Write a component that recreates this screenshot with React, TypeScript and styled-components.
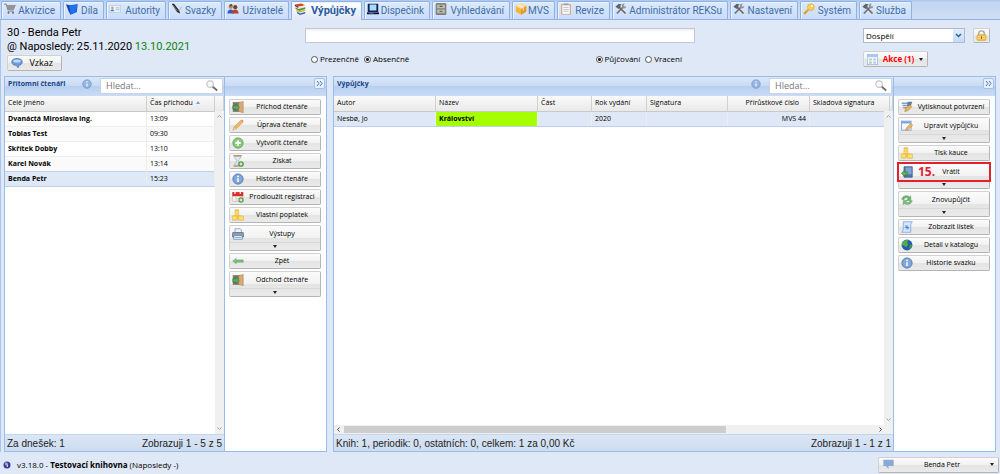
import React from "react";
import styled, { createGlobalStyle, css } from "styled-components";

const GlobalStyle = createGlobalStyle`
  *, *::before, *::after { box-sizing: border-box; }
  body {
    margin: 0;
    background: #dfe8f6;
    font-family: "Open Sans", "Noto Sans", sans-serif;
    font-size: 7px;
    line-height: 10px;
    color: #000;
  }
  button, input, select { font: inherit; color: inherit; margin: 0; }
  svg { display: block; flex: none; }
`;

/* ---------- icons ---------- */

type IconName =
  | "cart" | "book" | "card" | "pen" | "users" | "books" | "monitor" | "cabinet"
  | "box" | "clipboard" | "tools" | "key" | "bubble" | "lock" | "calendar"
  | "door" | "pencil" | "add" | "hourglass" | "info" | "calAdd" | "coins"
  | "printer" | "arrowLeft" | "print" | "edit" | "returnBook" | "recycle"
  | "script" | "globe" | "flag" | "search" | "orb";

const shapes: Record<IconName, React.ReactNode> = {
  cart: (
    <>
      <path d="M0 1.500h3l2 7.500h7.500L15 2.500" fill="none" stroke="#7d7d7d" strokeWidth="1.300" />
      <path d="M3.500 2.500h11.500l-2.500 6H5z" fill="#949494" />
      <path d="M5 11h8" stroke="#777" />
      <circle cx="6" cy="13" r="1.300" fill="#666" />
      <circle cx="12" cy="13" r="1.300" fill="#666" />
    </>
  ),
  book: (
    <>
      <path d="M0 1.500l5 1.500L15.500 1.500 14.500 12 6 15.500 3.500 11z" fill="#0f48b8" />
      <path d="M4 3.500L15 2l-1 9.500-7.500 3z" fill="#2172ee" />
    </>
  ),
  card: (
    <>
      <rect x="0.500" y="3.500" width="15" height="9" fill="#eaf2fc" stroke="#b7cdea" />
      <circle cx="4.500" cy="6.500" r="1.700" fill="#c9a26b" />
      <path d="M2 11c0-3 5-3 5 0z" fill="#4d7fc4" />
      <path d="M9 6.500h5M9 9h5" stroke="#8eb0dc" />
    </>
  ),
  pen: (
    <>
      <path d="M1 1l3 0 7 9 1 4-4-2z" fill="#222" />
      <path d="M3 3l6 8" stroke="#999" />
      <path d="M10 10c2-1 3-2 4-5" stroke="#9aa8bb" fill="none" />
    </>
  ),
  users: (
    <>
      <circle cx="5" cy="5" r="2.800" fill="#b5824f" />
      <path d="M0.500 14c0-7 9-7 9 0z" fill="#2f5fb3" />
      <circle cx="11" cy="5.500" r="2.800" fill="#7a4222" />
      <path d="M6.500 14c0-7 9-7 9 0z" fill="#b8442c" />
      <path d="M3 3.500c1-2.500 4-2 4.500 0z" fill="#4d3116" />
    </>
  ),
  books: (
    <>
      <path d="M1 2l9-1.500 5 2.500-9 2z" fill="#d4432c" />
      <path d="M1 2l5 3v2L1 4z" fill="#8f2413" />
      <path d="M6 5l9-2v2L6 7z" fill="#f6e7c6" />
      <path d="M2 5.500l4 2.500 9-2.500v2.500L7 10.500 2 7.500z" fill="#4a9b3e" />
      <path d="M3 8.500l4 2.500 8-2.500v2l-8 2.500-4-2.500z" fill="#e9ae2e" />
      <path d="M4 11.500L8 14l7-2v2l-7 2-4-2.500z" fill="#2d67b8" />
    </>
  ),
  monitor: (
    <>
      <rect x="1" y="1" width="14" height="11" fill="#12225c" />
      <rect x="3.500" y="2" width="9" height="8" fill="#a8dcf8" />
      <path d="M0 12.500h16v2.500H0z" fill="#0b1030" />
      <path d="M3 13.500h6" stroke="#7f8fc4" />
    </>
  ),
  cabinet: (
    <>
      <rect x="1.500" y="0.500" width="13" height="15" rx="1" fill="#8f9187" stroke="#6a6c64" />
      <path d="M3 2.500h10v4H3zM3 9h10v4H3z" fill="#bfc1b6" />
      <path d="M6 4.500h4M6 11h4" stroke="#55574f" strokeWidth="1.500" />
    </>
  ),
  box: (
    <>
      <path d="M8 0.500l7 3.500v7.500L8 15.500 1 11.500V4z" fill="#f4b53f" />
      <path d="M8 0.500L15 4 8 8 1 4z" fill="#ffe09a" />
      <path d="M8 8l7-4v7.500l-7 4z" fill="#e39a2c" />
      <path d="M4 2.500l7 4v3" stroke="#fff3cf" strokeWidth="1.500" fill="none" />
    </>
  ),
  clipboard: (
    <>
      <rect x="1.500" y="1.500" width="13" height="14" fill="#d3a47c" />
      <rect x="3" y="3" width="10" height="11.500" fill="#fbfbfb" />
      <rect x="5" y="0.500" width="6" height="2.500" fill="#a5a5a5" />
      <path d="M4.500 6h7M4.500 8.500h7M4.500 11h7" stroke="#a9b6c6" />
    </>
  ),
  tools: (
    <>
      <path d="M2.500 14L11 5" stroke="#6b747e" strokeWidth="2.200" />
      <path d="M9 4c0-3 3-4 4-3l-1.500 2 1.500 2 2-1c0 3-3 4-5 3z" fill="#8b949e" />
      <path d="M5 5l9 9" stroke="#7b624a" strokeWidth="2.200" />
      <path d="M0.500 5L5 1l4 1-2 1.500.5 2L5 8z" fill="#5b636d" />
    </>
  ),
  key: (
    <>
      <path d="M8 8L2 14" stroke="#e0a934" strokeWidth="3" />
      <path d="M3 11l2 2M1 13l2 2" stroke="#d99d1c" strokeWidth="1.500" />
      <circle cx="10.500" cy="5.500" r="4.500" fill="#f8cf5e" stroke="#e0a934" />
      <circle cx="12" cy="4" r="1.300" fill="#fff" />
    </>
  ),
  bubble: (
    <>
      <path d="M8 2c4 0 7 1.500 7 4.500S12.500 11 10.500 11l-1 3.500L7 11c-3.500 0-6-1.500-6-4.500S4 2 8 2z" fill="#6f9bdc" stroke="#4a74b8" />
      <ellipse cx="8" cy="5.300" rx="5" ry="2" fill="#c2d8f7" />
    </>
  ),
  lock: (
    <>
      <path d="M4 8V5c0-5 8-5 8 0v3" fill="none" stroke="#a8a8a8" strokeWidth="2" />
      <rect x="1.500" y="7" width="13" height="8" rx="1" fill="#f3c34e" stroke="#d09a2c" />
      <path d="M2 9.500h12M2 12.500h12" stroke="#fbe2a0" />
      <path d="M8 9v4" stroke="#9d6c12" strokeWidth="1.500" />
    </>
  ),
  calendar: (
    <>
      <rect x="0.500" y="0.500" width="15" height="15" fill="#f4f9ff" stroke="#8fb2de" />
      <path d="M1 1h14v3.500H1z" fill="#a9c8ef" />
      <path d="M3 6.500h4v3H3zM3 11h4v3H3z" fill="#b6d0b9" />
      <path d="M9 6.500h4v3H9zM9 11h4v3H9z" fill="#b7cdea" />
    </>
  ),
  door: (
    <>
      <path d="M1 1.500h10v13H1z" fill="#7b786d" />
      <path d="M9 2l6-1.500V15.500L9 14z" fill="#d5aa76" stroke="#a57a46" strokeWidth="0.600" />
      <path d="M1 6.500h4V4l4.500 4.500L5 13v-2.500H1z" fill="#5aae5f" stroke="#2c6e34" strokeWidth="0.700" />
    </>
  ),
  pencil: (
    <>
      <path d="M3 10.500L12 1.500l2.500 2.500-9 9z" fill="#f3b95c" stroke="#c98a30" strokeWidth="0.800" />
      <path d="M12 1.500l2.500 2.500 1-1.500-2-2z" fill="#e5886e" />
      <path d="M3 10.500l2.500 2.500L1 15z" fill="#f2ddb5" stroke="#b98b4e" strokeWidth="0.600" />
    </>
  ),
  add: (
    <>
      <circle cx="8" cy="8" r="7" fill="#7dbf6f" stroke="#6bab62" />
      <circle cx="8" cy="8" r="5.200" fill="#8fcb80" />
      <path d="M8 4.500v7M4.500 8h7" stroke="#fff" strokeWidth="2.400" />
    </>
  ),
  hourglass: (
    <>
      <path d="M2 1h11M2 14.500h7" stroke="#b98e62" strokeWidth="2" />
      <path d="M3.500 2h8c0 4-3 4-3 6s1 2 2 5.500h-7C3.500 11 6.500 10 6.500 8s-3-2-3-6z" fill="#dfe8ee" stroke="#9aa5b0" strokeWidth="0.800" />
      <circle cx="12" cy="12" r="3.800" fill="#4f9d45" />
      <path d="M12 10v4M10 12h4" stroke="#fff" strokeWidth="1.400" />
    </>
  ),
  info: (
    <>
      <circle cx="8" cy="8" r="7" fill="#6d96cf" stroke="#6489bd" />
      <circle cx="8" cy="8" r="5.300" fill="#85a9da" />
      <path d="M8 7v5" stroke="#fff" strokeWidth="2" />
      <circle cx="8" cy="4.500" r="1.200" fill="#fff" />
    </>
  ),
  calAdd: (
    <>
      <rect x="1" y="2" width="13.500" height="12" fill="#f7f7f7" stroke="#c0c0c0" />
      <path d="M0.500 1.500h14.500V7H0.500z" fill="#dd2a2a" />
      <path d="M4 0v4M11 0v4" stroke="#fff" strokeWidth="1.500" />
      <path d="M4 9.500h4M4 12h3" stroke="#b5b5b5" />
      <circle cx="12" cy="12" r="3.600" fill="#4f9d45" />
      <path d="M12 10v4M10 12h4" stroke="#fff" strokeWidth="1.400" />
    </>
  ),
  coins: (
    <>
      <path d="M4 1h5v12H4z" fill="#f3c944" stroke="#e0ae38" strokeWidth="0.700" />
      <path d="M0.500 9h6v6h-6zM8.500 8.500l7 1V15h-7z" fill="#f8d65c" stroke="#e0ae38" strokeWidth="0.700" />
      <path d="M4 4h5M4 7h5M1 12h5M9 12.300h6" stroke="#fff0ae" />
    </>
  ),
  printer: (
    <>
      <path d="M4 6V1h7l1.500 1.500V6z" fill="#eef4fc" stroke="#7b95b8" />
      <path d="M1 6h14l.5 6H.5z" fill="#8f9cae" stroke="#5f6f86" />
      <path d="M3 10h10l1 5H2z" fill="#e9f0fb" stroke="#6d86ad" />
      <path d="M4 12.500h8" stroke="#7fa7e0" strokeWidth="1.300" />
    </>
  ),
  arrowLeft: (
    <path d="M1 8l4.500-3.500v2H15v3H5.500v2z" fill="#7dc07f" stroke="#5ea263" strokeWidth="0.700" />
  ),
  print: (
    <>
      <path d="M1 3h9M2 6h7M3 9h5" stroke="#8ba0bb" strokeWidth="1.800" />
      <path d="M9 1h6l-2 6H8z" fill="#617b9f" />
      <path d="M5 14l1-4 6-5 2.500 2.500L9 13z" fill="#e9b35b" stroke="#a8793a" strokeWidth="0.700" />
    </>
  ),
  edit: (
    <>
      <rect x="0.500" y="1.500" width="13" height="12" fill="#f4f8fe" stroke="#6b95d2" />
      <path d="M1 2h12v2.500H1z" fill="#6f9ee2" />
      <path d="M7 10.500l6-6 2.500 2.500-6 6-3.500 1z" fill="#f0b55a" stroke="#bf8330" strokeWidth="0.700" />
    </>
  ),
  returnBook: (
    <>
      <path d="M4 1h11v14H4z" fill="#4d77b0" stroke="#3d5c8d" />
      <path d="M6 2h8v9H6z" fill="#7fa3cf" />
      <path d="M0.500 9.500L5 5.500v2.500h4v4H5v2.500z" fill="#62ad59" stroke="#2f7434" strokeWidth="0.700" />
    </>
  ),
  recycle: (
    <>
      <path d="M1 7c1-5 8-6 10-3l2-1.500V8.500H7.500L9.500 6C8 4 4.500 4.500 4 7.500z" fill="#6fb36f" stroke="#5a9a61" strokeWidth="0.700" />
      <path d="M15 9c-1 5-8 6-10 3.500L3 14V8.500h5.500l-2 2C8 12.500 11.500 11.500 12 9z" fill="#7fbd7a" stroke="#5a9a61" strokeWidth="0.700" />
    </>
  ),
  script: (
    <>
      <path d="M3 1h12l-2 3v11H1l2-3z" fill="#d7e7fb" stroke="#6f9fdc" />
      <path d="M5 8.500h6M8 5.500v6M5.500 6l5 5" stroke="#4b86d3" strokeWidth="1.300" />
    </>
  ),
  globe: (
    <>
      <circle cx="8" cy="8" r="7.200" fill="#2459b5" />
      <path d="M3 3c3-2 6-2 7-1.500L8 5l2 2-3 4-3-2-3-1c0-2 1-4 2-5z" fill="#4fae4a" />
      <path d="M11 8l4-1c0 4-2 6-4 7z" fill="#3f9a42" />
    </>
  ),
  flag: <path d="M0.500 1h15v9H8v4.500L4 10H0.500z" fill="#8aa8d8" />,
  search: (
    <>
      <circle cx="5.500" cy="5.500" r="4.300" fill="#f9f9f9" stroke="#c6c6c6" strokeWidth="1.500" />
      <path d="M9 9l6 5" stroke="#6a6a6a" strokeWidth="2.200" />
    </>
  ),
  orb: (
    <>
      <circle cx="8" cy="8" r="7" fill="#3f3a8f" />
      <circle cx="6.500" cy="5.500" r="3.200" fill="#9a9ae0" />
      <path d="M8.500 7v5" stroke="#fff" strokeWidth="2" />
    </>
  ),
};

const Icon = ({ name, size = 12 }: { name: IconName; size?: number }) => (
  <svg width={size} height={size} viewBox="0 0 16 16" aria-hidden="true">
    {shapes[name]}
  </svg>
);

/* ---------- page ---------- */

const Page = styled.div`
  display: flex;
  flex-direction: column;
  min-height: 100vh;
`;

const TabBar = styled.nav`
  display: flex;
  align-items: flex-end;
  gap: 2px;
  height: 20px;
  padding: 0 1px;
  border-bottom: 1px solid #8db2e3;
  background: linear-gradient(#a9c5ee 0, #c0d5f3 2px, #d0dff3 100%);
`;

const Tab = styled.button<{ $width: number; $active?: boolean }>`
  display: flex;
  align-items: flex-start;
  justify-content: space-between;
  flex: 0 1 ${(p) => p.$width}px;
  min-width: 0;
  height: 18px;
  padding: 0 5px 0 2px;
  border: 1px solid #8db2e3;
  border-bottom: 0;
  border-radius: 2px 2px 0 0;
  background: linear-gradient(#dce9fc, #c9dcfb);
  box-shadow: inset 1px 1px 0 #eaf2fd;
  font-family: Roboto, "Open Sans", sans-serif;
  font-size: 10px;
  line-height: 18px;
  white-space: nowrap;
  color: #416da3;
  ${(p) =>
    p.$active &&
    css`
      height: 19px;
      margin-bottom: -1px;
      background: linear-gradient(#ffffff, #dfe8f6);
      font-size: 11px;
      font-weight: 700;
      color: #2d5c9e;
    `}
  svg { margin-top: 1px; }
`;

const Top = styled.header`
  display: grid;
  grid-template-columns: 304px minmax(0, 390px) 1fr;
  height: 56px;
  padding-top: 6px;
  border-left: 1px solid #a9c5ee;
`;

const Reader = styled.div`
  display: flex;
  flex-direction: column;
  align-items: flex-start;
  padding-left: 6px;
  font-family: Roboto, "Open Sans", sans-serif;
  font-size: 11px;
  line-height: 14px;
`;

const Fresh = styled.span`
  color: #0a870a;
`;

const buttonFace = css`
  border: 1px solid #d1d1d1;
  border-right-color: #b4b4b4;
  border-bottom-color: #b4b4b4;
  border-radius: 2px;
  background: linear-gradient(#fbfbfb, #f2f2f2 48%, #e4e4e4 52%, #eaeaea);
`;

const MessageButton = styled.button`
  ${buttonFace}
  display: flex;
  align-items: center;
  justify-content: space-between;
  width: 55px;
  height: 16px;
  margin-top: 1px;
  padding: 0 8px 0 3px;
  font-family: "Open Sans", sans-serif;
  font-size: 9px;
  line-height: 12px;
`;

const Entry = styled.div`
  display: flex;
  flex-direction: column;
  gap: 10px;
  padding-top: 2px;
`;

const CodeInput = styled.input`
  width: 100%;
  height: 15px;
  padding: 0 4px;
  border: 1px solid #c3c8d6;
  background: linear-gradient(#eeeeee, #ffffff 3px);
  font-size: 9px;
`;

const Modes = styled.div`
  display: flex;
  justify-content: space-between;
  padding: 0 13px 0 6px;
`;

const RadioGroup = styled.div`
  display: flex;
  gap: 5px;
`;

const RadioLabel = styled.label`
  display: flex;
  align-items: center;
  gap: 2px;
  font-size: 8px;
  line-height: 12px;
`;

const Radio = styled.input`
  appearance: none;
  width: 7px;
  height: 7px;
  border: 1px solid #555;
  border-radius: 50%;
  background: #fff;
  &:checked {
    background: radial-gradient(circle, #222 0 1px, #fff 2px);
  }
`;

const Options = styled.div`
  display: flex;
  flex-direction: column;
  gap: 8px;
  justify-self: end;
  width: 137px;
  padding-top: 2px;
`;

const OptionRow = styled.div`
  display: flex;
  align-items: center;
  gap: 8px;
`;

const SelectWrap = styled.div`
  display: flex;
  width: 102px;
  height: 15px;
  border: 1px solid #b5b8c8;
  background: #fff;
`;

const Select = styled.select`
  appearance: none;
  width: 100%;
  padding: 0 2px;
  border: 0;
  background:
    no-repeat right / 11px 100% linear-gradient(#e3eefc, #c3daf8);
  font-size: 8px;
  line-height: 12px;
`;

const SelectMark = styled.span`
  display: flex;
  align-items: center;
  width: 0;
  direction: rtl;
  pointer-events: none;
  svg { margin-right: 2px; }
`;

const LockButton = styled.button`
  ${buttonFace}
  display: grid;
  place-items: center;
  width: 17px;
  height: 15px;
  padding: 0;
`;

const ActionsButton = styled.button`
  ${buttonFace}
  display: flex;
  align-items: center;
  justify-content: space-between;
  width: 65px;
  height: 16px;
  padding: 0 4px 0 3px;
  font-size: 8px;
  font-weight: 700;
  color: #f00;
`;

const Caret = styled.span`
  width: 0;
  height: 0;
  border: 2px solid transparent;
  border-top: 3px solid #222;
  border-bottom: 0;
`;

/* ---------- panels ---------- */

const Work = styled.main`
  display: flex;
  flex: 1;
  gap: 6px;
  padding: 0 4px 0 3px;
  border-left: 1px solid #a9c5ee;
`;

const Panel = styled.section<{ $width?: number }>`
  display: flex;
  flex: ${(p) => (p.$width ? `0 0 ${p.$width}px` : "1 1 0")};
  min-width: 0;
  border: 1px solid #99bce8;
  background: #fff;
`;

const GridArea = styled.div`
  display: flex;
  flex: 1;
  flex-direction: column;
  min-width: 0;
  border-right: 1px solid #99bce8;
`;

const SideArea = styled.aside`
  flex: 0 0 101px;
`;

const PanelHead = styled.div`
  display: flex;
  align-items: flex-start;
  height: 19px;
  padding: 1px 1px 0 3px;
  background: linear-gradient(#dbe7f7, #c9dbf3 45%, #b7cff0 50%, #cadcf5);
`;

const PanelTitle = styled.h2`
  flex: 1;
  margin: 0;
  font-size: 7px;
  line-height: 12px;
  font-weight: 700;
  color: #15428b;
`;

const HeadInfo = styled.span`
  margin: 1px 8px 0 0;
  opacity: 0.7;
`;

const SearchBox = styled.label`
  display: flex;
  align-items: center;
  width: 123px;
  height: 16px;
  padding: 0 4px 0 5px;
  border: 1px solid #c9d3e3;
  background: #fff;
`;

const SearchInput = styled.input`
  flex: 1;
  min-width: 0;
  padding: 0;
  border: 0;
  background: none;
  font-size: 9px;
  line-height: 12px;
  &::placeholder { color: #777; opacity: 1; }
`;

const CollapseButton = styled.button`
  display: grid;
  place-items: center;
  width: 11px;
  height: 11px;
  margin: 0 0 0 auto;
  padding: 0;
  border: 1px solid #a4c0e8;
  border-radius: 2px;
  background: #e6effc;
`;

const Viewport = styled.div`
  display: flex;
  flex: 1;
  flex-direction: column;
  position: relative;
`;

const Table = styled.table`
  width: 100%;
  border-collapse: collapse;
  table-layout: fixed;
`;

const HeadCell = styled.th<{ $end?: boolean }>`
  height: 15px;
  padding: 0 10px 0 3px;
  border-right: 1px solid #d0d0d0;
  border-bottom: 1px solid #c9c9c9;
  background: linear-gradient(#fafafa, #e9e9ea);
  font-weight: 400;
  text-align: ${(p) => (p.$end ? "right" : "left")};
  white-space: nowrap;
`;

const Sort = styled.span`
  display: inline-block;
  margin-left: 3px;
  border: 2px solid transparent;
  border-top: 0;
  border-bottom: 3px solid #6f9fdc;
  vertical-align: 1px;
`;

const Cell = styled.td<{ $bold?: boolean; $end?: boolean; $mark?: boolean }>`
  height: 15px;
  padding: 0 3px;
  border-top: 1px solid #ededed;
  border-right: 1px solid #ededed;
  background: ${(p) => (p.$mark ? "#a6ff00" : "transparent")};
  font-weight: ${(p) => (p.$bold ? 700 : 400)};
  text-align: ${(p) => (p.$end ? "right" : "left")};
  white-space: nowrap;
`;

const Row = styled.tr<{ $selected?: boolean }>`
  background: #fff;
  &:nth-child(even) { background: #fafafa; }
  ${(p) =>
    p.$selected &&
    css`
      &, &:nth-child(odd) { background: #dfe8f6; }
      ${Cell} {
        border-top: 1px solid #bdd0ef;
        border-bottom: 1px solid #bdd0ef;
      }
    `}
`;

const VScroll = styled.div<{ $short?: boolean }>`
  position: absolute;
  top: 15px;
  right: 0;
  bottom: ${(p) => (p.$short ? 9 : 0)}px;
  display: flex;
  flex-direction: column;
  align-items: center;
  justify-content: space-between;
  width: 9px;
  padding: 3px 0;
  background: #f0f0f0;
`;

const HScroll = styled.div`
  display: flex;
  align-items: center;
  gap: 3px;
  height: 9px;
  margin-top: auto;
  padding: 0 10px 0 2px;
  background: #f0f0f0;
`;

const HTrack = styled.div`
  flex: 1;
  height: 9px;
`;

const HThumb = styled.div`
  width: 72%;
  height: 7px;
  margin-top: 1px;
  background: #cdcdcd;
`;

const Summary = styled.div`
  display: flex;
  align-items: center;
  justify-content: space-between;
  height: 17px;
  padding: 1px 2px 0;
  border-top: 1px solid #c2d4ee;
  background: linear-gradient(#dbe6f5, #cddcf0);
  font-family: "Liberation Sans", Arial, sans-serif;
  font-size: 10px;
  line-height: 14px;
  color: #222;
`;

const ButtonList = styled.div`
  display: flex;
  flex-direction: column;
  gap: 2px;
  padding: 3px 5px 3px 4px;
`;

const ToolButton = styled.button<{ $split?: boolean }>`
  ${buttonFace}
  position: relative;
  display: flex;
  flex-direction: column;
  width: 100%;
  height: ${(p) => (p.$split ? 26 : 16)}px;
  padding: 0;
`;

const ToolFace = styled.span<{ $split?: boolean }>`
  display: flex;
  align-items: center;
  width: 100%;
  height: ${(p) => (p.$split ? 16 : 14)}px;
  padding-left: 2px;
`;

const ToolText = styled.span`
  flex: 1;
  text-align: center;
  white-space: nowrap;
`;

const SplitFoot = styled.span`
  display: flex;
  align-items: center;
  justify-content: center;
  width: 100%;
  flex: 1;
  border-top: 1px solid #d8d8d8;
`;

const StepMark = styled.span`
  position: absolute;
  top: -2px;
  left: -2px;
  right: -2px;
  height: 20px;
  padding-left: 19px;
  border: 2px solid #e3202c;
  font-size: 12px;
  line-height: 16px;
  font-weight: 700;
  text-align: left;
  color: #e3202c;
`;

const StatusBar = styled.footer`
  display: flex;
  align-items: center;
  height: 22px;
  padding: 3px 1px 0 3px;
  font-size: 8px;
  gap: 6px;
`;

const UserButton = styled.button`
  ${buttonFace}
  display: flex;
  align-items: center;
  width: 121px;
  height: 16px;
  margin-left: auto;
  padding: 0 4px;
  font-size: 7px;
`;

const UserName = styled.span`
  flex: 1;
  text-align: center;
`;

/* ---------- data ---------- */

const tabs: { label: string; icon: IconName; width: number; active?: boolean }[] = [
  { label: "Akvizice", icon: "cart", width: 60 },
  { label: "Díla", icon: "book", width: 41 },
  { label: "Autority", icon: "card", width: 60 },
  { label: "Svazky", icon: "pen", width: 54 },
  { label: "Uživatelé", icon: "users", width: 65 },
  { label: "Výpůjčky", icon: "books", width: 71, active: true },
  { label: "Dispečink", icon: "monitor", width: 66 },
  { label: "Vyhledávání", icon: "cabinet", width: 78 },
  { label: "MVS", icon: "box", width: 43 },
  { label: "Revize", icon: "clipboard", width: 53 },
  { label: "Administrátor REKSu", icon: "tools", width: 116 },
  { label: "Nastavení", icon: "tools", width: 68 },
  { label: "Systém", icon: "key", width: 57 },
  { label: "Služba", icon: "tools", width: 53 },
];

const readers = [
  ["Dvanáctá Miroslava Ing.", "13:09"],
  ["Tobias Test", "09:30"],
  ["Skřítek Dobby", "13:10"],
  ["Karel Novák", "13:14"],
  ["Benda Petr", "15:23"],
];

type Tool = { label: string; icon: IconName; split?: boolean; step?: string };

const readerTools: Tool[] = [
  { label: "Příchod čtenáře", icon: "door" },
  { label: "Úprava čtenáře", icon: "pencil" },
  { label: "Vytvořit čtenáře", icon: "add" },
  { label: "Získat", icon: "hourglass" },
  { label: "Historie čtenáře", icon: "info" },
  { label: "Prodloužit registraci", icon: "calAdd" },
  { label: "Vlastní poplatek", icon: "coins" },
  { label: "Výstupy", icon: "printer", split: true },
  { label: "Zpět", icon: "arrowLeft" },
  { label: "Odchod čtenáře", icon: "door", split: true },
];

const loanTools: Tool[] = [
  { label: "Vytisknout potvrzení", icon: "print" },
  { label: "Upravit výpůjčku", icon: "edit", split: true },
  { label: "Tisk kauce", icon: "coins" },
  { label: "Vrátit", icon: "returnBook", split: true, step: "15." },
  { label: "Znovupůjčit", icon: "recycle", split: true },
  { label: "Zobrazit lístek", icon: "script" },
  { label: "Detail v katalogu", icon: "globe" },
  { label: "Historie svazku", icon: "info" },
];

/* ---------- parts ---------- */

const Arrow = ({ d, color = "#a5a5a5" }: { d: string; color?: string }) => (
  <svg width="5" height="5" viewBox="0 0 5 5" aria-hidden="true">
    <path d={d} fill="none" stroke={color} />
  </svg>
);

const Tools = ({ items }: { items: Tool[] }) => (
  <ButtonList>
    {items.map((t) => (
      <ToolButton key={t.label} type="button" $split={t.split}>
        <ToolFace $split={t.split}>
          <Icon name={t.icon} />
          <ToolText>{t.label}</ToolText>
        </ToolFace>
        {t.split && (
          <SplitFoot>
            <Caret />
          </SplitFoot>
        )}
        {t.step && <StepMark>{t.step}</StepMark>}
      </ToolButton>
    ))}
  </ButtonList>
);

const GridHead = ({ title }: { title: string }) => (
  <PanelHead>
    <PanelTitle>{title}</PanelTitle>
    <HeadInfo>
      <Icon name="info" size={10} />
    </HeadInfo>
    <SearchBox>
      <SearchInput type="text" placeholder="Hledat..." aria-label={`${title}: hledat`} />
      <Icon name="search" />
    </SearchBox>
  </PanelHead>
);

const SideHead = () => (
  <PanelHead>
    <CollapseButton type="button" aria-label="Sbalit">
      <svg width="7" height="7" viewBox="0 0 7 7" aria-hidden="true">
        <path d="M1 1l2 2.500L1 6M4 1l2 2.500L4 6" fill="none" stroke="#4c79b8" />
      </svg>
    </CollapseButton>
  </PanelHead>
);

const Choice = ({ name, label, checked }: { name: string; label: string; checked?: boolean }) => (
  <RadioLabel>
    <Radio type="radio" name={name} defaultChecked={checked} />
    {label}
  </RadioLabel>
);

export default function App() {
  return (
    <Page>
      <GlobalStyle />
      <TabBar>
        {tabs.map((t) => (
          <Tab key={t.label} type="button" $width={t.width} $active={t.active}>
            <Icon name={t.icon} />
            <span>{t.label}</span>
          </Tab>
        ))}
      </TabBar>

      <Top>
        <Reader>
          <div>30 - Benda Petr</div>
          <div>
            @ Naposledy: 25.11.2020 <Fresh>13.10.2021</Fresh>
          </div>
          <MessageButton type="button">
            <Icon name="bubble" />
            Vzkaz
          </MessageButton>
        </Reader>
        <Entry>
          <CodeInput type="text" aria-label="Kód" />
          <Modes>
            <RadioGroup>
              <Choice name="place" label="Prezenčně" />
              <Choice name="place" label="Absenčně" checked />
            </RadioGroup>
            <RadioGroup>
              <Choice name="action" label="Půjčování" checked />
              <Choice name="action" label="Vracení" />
            </RadioGroup>
          </Modes>
        </Entry>
        <Options>
          <OptionRow>
            <SelectWrap>
              <Select aria-label="Oddělení" defaultValue="Dospělí">
                <option>Dospělí</option>
              </Select>
              <SelectMark>
                <svg width="7" height="5" viewBox="0 0 7 5" aria-hidden="true">
                  <path d="M1 1l2.500 2.500L6 1" fill="none" stroke="#2f5f9e" strokeWidth="1.500" />
                </svg>
              </SelectMark>
            </SelectWrap>
            <LockButton type="button" aria-label="Zamknout">
              <Icon name="lock" size={11} />
            </LockButton>
          </OptionRow>
          <ActionsButton type="button">
            <Icon name="calendar" size={11} />
            Akce (1)
            <Caret />
          </ActionsButton>
        </Options>
      </Top>

      <Work>
        <Panel $width={323}>
          <GridArea>
            <GridHead title="Přítomní čtenáři" />
            <Viewport>
              <Table>
                <colgroup>
                  <col />
                  <col style={{ width: 68 }} />
                  <col style={{ width: 9 }} />
                </colgroup>
                <thead>
                  <tr>
                    <HeadCell>Celé jméno</HeadCell>
                    <HeadCell>
                      Čas příchodu
                      <Sort />
                    </HeadCell>
                    <HeadCell />
                  </tr>
                </thead>
                <tbody>
                  {readers.map(([name, time]) => (
                    <Row key={name} $selected={name === "Benda Petr"}>
                      <Cell $bold>{name}</Cell>
                      <Cell>{time}</Cell>
                      <Cell />
                    </Row>
                  ))}
                </tbody>
              </Table>
              <VScroll>
                <Arrow d="M0.500 3.500l2-2 2 2" />
                <Arrow d="M0.500 1.500l2 2 2-2" />
              </VScroll>
            </Viewport>
            <Summary>
              <span>Za dnešek: 1</span>
              <span>Zobrazuji 1 - 5 z 5</span>
            </Summary>
          </GridArea>
          <SideArea>
            <SideHead />
            <Tools items={readerTools} />
          </SideArea>
        </Panel>

        <Panel>
          <GridArea>
            <GridHead title="Výpůjčky" />
            <Viewport>
              <Table>
                <colgroup>
                  <col />
                  <col style={{ width: 102 }} />
                  <col style={{ width: 54 }} />
                  <col style={{ width: 55 }} />
                  <col style={{ width: 81 }} />
                  <col style={{ width: 82 }} />
                  <col style={{ width: 80 }} />
                  <col style={{ width: 3 }} />
                </colgroup>
                <thead>
                  <tr>
                    <HeadCell>Autor</HeadCell>
                    <HeadCell>Název</HeadCell>
                    <HeadCell>Část</HeadCell>
                    <HeadCell>Rok vydání</HeadCell>
                    <HeadCell>Signatura</HeadCell>
                    <HeadCell $end>Přírůstkové číslo</HeadCell>
                    <HeadCell>Skladová signatura</HeadCell>
                    <HeadCell />
                  </tr>
                </thead>
                <tbody>
                  <Row $selected>
                    <Cell>Nesbø, Jo</Cell>
                    <Cell $bold $mark>
                      Království
                    </Cell>
                    <Cell />
                    <Cell>2020</Cell>
                    <Cell />
                    <Cell $end>MVS 44</Cell>
                    <Cell />
                    <Cell />
                  </Row>
                </tbody>
              </Table>
              <VScroll $short>
                <Arrow d="M0.500 3.500l2-2 2 2" />
                <Arrow d="M0.500 1.500l2 2 2-2" />
              </VScroll>
              <HScroll>
                <Arrow d="M3.500 0.500l-2 2 2 2" color="#444" />
                <HTrack>
                  <HThumb />
                </HTrack>
                <Arrow d="M1.500 0.500l2 2-2 2" color="#444" />
              </HScroll>
            </Viewport>
            <Summary>
              <span>Knih: 1, periodik: 0, ostatních: 0, celkem: 1 za 0,00 Kč</span>
              <span>Zobrazuji 1 - 1 z 1</span>
            </Summary>
          </GridArea>
          <SideArea>
            <SideHead />
            <Tools items={loanTools} />
          </SideArea>
        </Panel>
      </Work>

      <StatusBar>
        <Icon name="orb" size={8} />
        <span>
          v3.18.0 - <b>Testovací knihovna</b> (Naposledy -)
        </span>
        <UserButton type="button">
          <Icon name="flag" size={11} />
          <UserName>Benda Petr</UserName>
          <Caret />
        </UserButton>
      </StatusBar>
    </Page>
  );
}
